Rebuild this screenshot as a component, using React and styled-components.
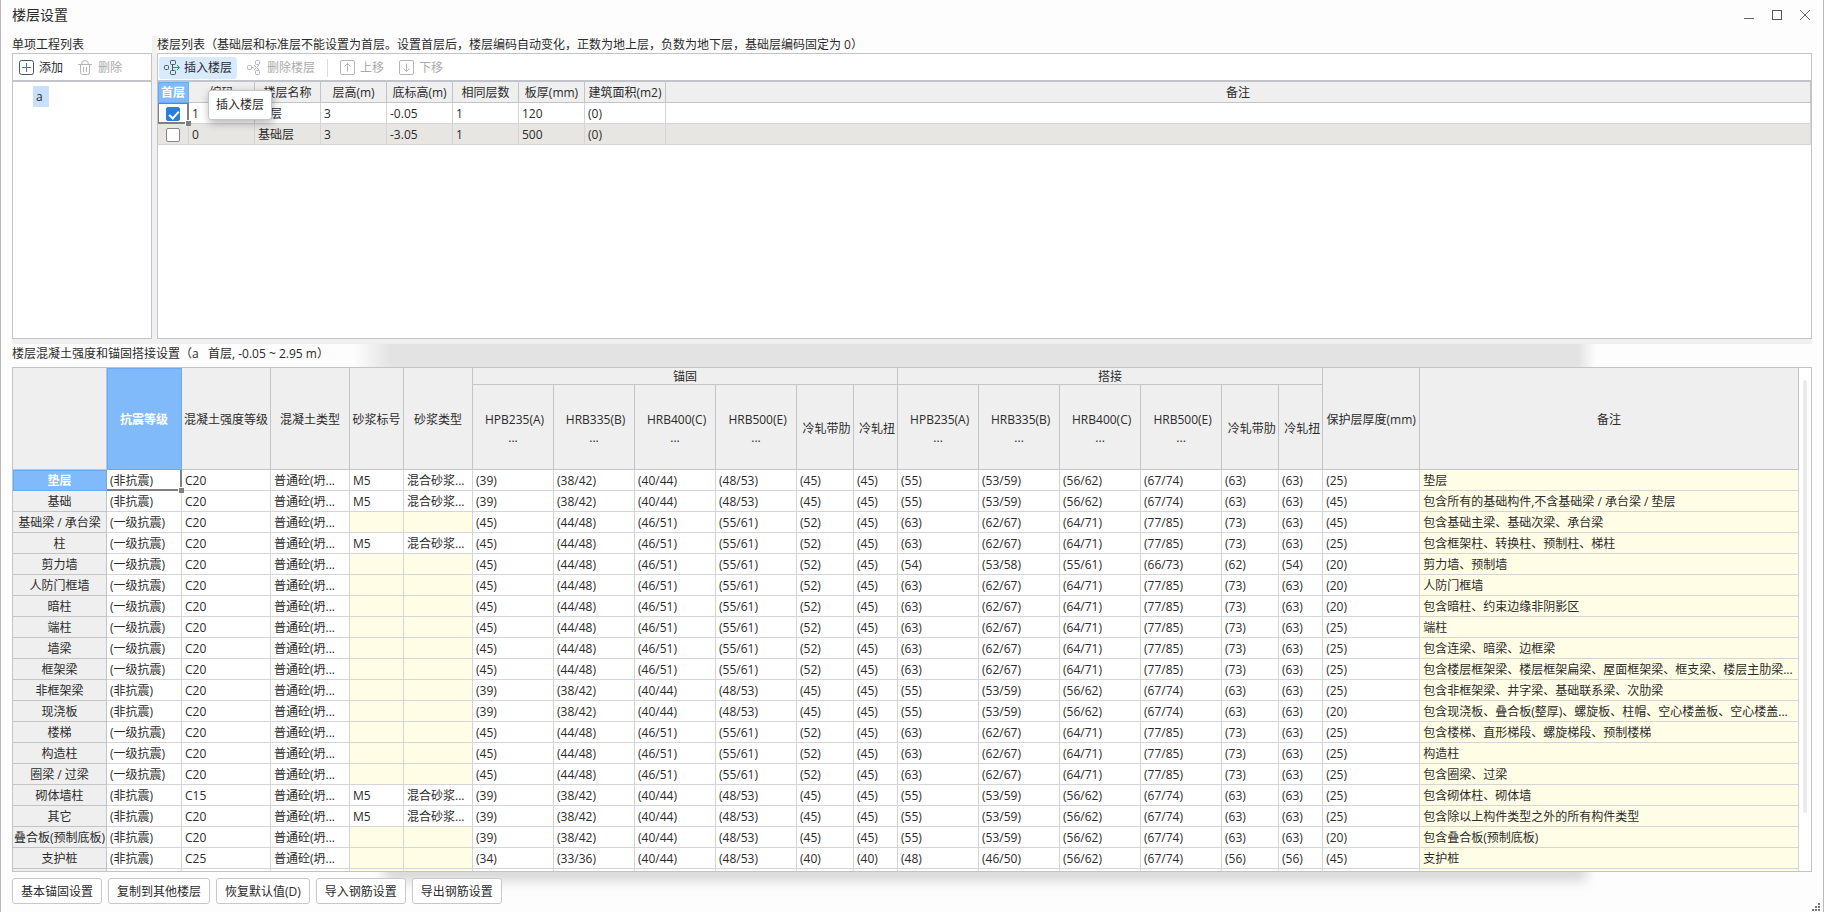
import React, { useState } from 'react';
import styled, { createGlobalStyle, css } from 'styled-components';

const GlobalStyle = createGlobalStyle`
  * {
    box-sizing: border-box;
  }
  body {
    margin: 0;
    color: #2b2b2b;
    font-family: "Open Sans", "Noto Sans CJK SC", sans-serif;
    font-size: 12px;
    line-height: 16px;
  }
  button, input {
    font: inherit;
    color: inherit;
  }
`;

const Window = styled.div`
  position: relative;
  display: flex;
  flex-direction: column;
  height: 100vh;
  overflow: hidden;
  background: #fdfdfd;
  border: solid #b9b9b9;
  border-width: 0 1px;
`;

const TitleBar = styled.header`
  display: flex;
  align-items: center;
  justify-content: space-between;
  height: 30px;
  margin-bottom: 6px;
  padding: 0 8px 0 11px;
`;

const Title = styled.h1`
  margin: 0;
  font-size: 14px;
  line-height: 20px;
  font-weight: 400;
`;

const WindowButtons = styled.div`
  display: flex;
  gap: 8px;
`;

const WindowButton = styled.button`
  display: flex;
  align-items: center;
  justify-content: center;
  width: 20px;
  height: 20px;
  padding: 0;
  border: 0;
  background: none;
`;

const Upper = styled.section`
  display: grid;
  grid-template-columns: 140px 1fr;
  gap: 5px;
  flex: 0 0 308px;
  padding-bottom: 5px;
  margin: 0 11px;
  background: #f0f0f0;
`;

const Pane = styled.div`
  display: flex;
  flex-direction: column;
  min-width: 0;
  background: #fdfdfd;
`;

const PaneTitle = styled.h2`
  margin: 0;
  height: 17px;
  font-size: 12px;
  line-height: 18px;
  font-weight: 400;
  white-space: nowrap;
`;

const Toolbar = styled.div`
  display: flex;
  align-items: center;
  height: 28px;
  padding: 1px 1px 0;
  background: #fff;
  border: 1px solid #c3c4c9;
`;

const ToolItem = styled.div`
  position: relative;
  display: flex;
  margin-right: 5px;
`;

const ToolButton = styled.button`
  display: flex;
  align-items: center;
  gap: 4px;
  height: 22px;
  padding: 0 5px;
  border: 0;
  border-radius: 3px;
  background: ${props => (props.$active ? '#d8eafe' : 'transparent')};
  white-space: nowrap;

  &:disabled {
    color: #ababab;
  }

  & + & {
    margin-left: 5px;
  }
`;

const Divider = styled.span`
  width: 1px;
  height: 18px;
  margin: 0 7px;
  background: #dcdcdc;
`;

const Tooltip = styled.div`
  position: absolute;
  top: 33px;
  left: 49px;
  z-index: 2;
  padding: 6px 7px;
  border: 1px solid #c6c6c6;
  border-radius: 3px;
  background: #fff;
  box-shadow: 1px 3px 8px rgba(0, 0, 0, 0.3);
  white-space: nowrap;
`;

const Panel = styled.div`
  flex: 1;
  min-height: 0;
  overflow: hidden;
  background: #fff;
  border: 1px solid #c3c4c9;
`;

const Tree = styled.ul`
  margin: 4px 0 0;
  padding: 0 0 0 20px;
  list-style: none;
`;

const TreeNode = styled.li`
  width: 16px;
  padding-left: 3px;
  line-height: 21px;
  background: #c9e0fc;
`;

const Table = styled.table`
  width: 100%;
  table-layout: fixed;
  border-collapse: separate;
  border-spacing: 0;
`;

const Head = styled.th`
  height: 21px;
  padding: 2px 0 0;
  line-height: 16px;
  font-weight: 400;
  text-align: center;
  white-space: pre;
  overflow: hidden;
  background: #efefef;
  border: solid #c3c4c6;
  border-width: 0 1px 1px 0;

  ${props =>
    props.$selected &&
    css`
      color: #fff;
      font-weight: 700;
      background: #80bafa;
      border-color: #6aabf0;
      box-shadow: inset 1px 1px #6aabf0;
    `}
`;

const GroupHead = styled(Head)`
  height: 17px;
  line-height: 14px;
`;

const SubHead = styled(Head)`
  height: 85px;
  padding-top: 4px;
  line-height: 18px;
`;

const Cell = styled.td`
  position: relative;
  height: 21px;
  padding: 2px 0 0 3px;
  line-height: 16px;
  white-space: nowrap;
  background: ${props =>
    props.$readonly ? '#fffde6' : props.$shaded ? '#e8e6e2' : '#fff'};
  border: solid #d5d5d5;
  border-width: 0 1px 1px 0;
`;

const Focus = styled.span`
  position: absolute;
  inset: 0 -1px -1px 0;
  border: solid #808080;
  border-width: ${props => (props.$boxed ? '1px 2px 2px 1px' : '0 2px 2px 0')};
  pointer-events: none;

  &::after {
    content: '';
    position: absolute;
    z-index: 1;
    right: -4px;
    bottom: -4px;
    width: 5px;
    height: 5px;
    background: #808080;
    border: solid #fff;
    border-width: 1px 0 0 1px;
  }
`;

const CheckBox = styled.input`
  appearance: none;
  position: relative;
  display: block;
  width: 14px;
  height: 14px;
  margin: 0 auto 0 5px;
  border: 1px solid #858585;
  border-radius: 2px;
  background: #fff;

  &:checked {
    border-color: #2a7ee3;
    background: #2a7ee3;
  }

  &:checked::after {
    content: '';
    position: absolute;
    left: 4px;
    top: 1px;
    width: 4px;
    height: 8px;
    border: solid #fff;
    border-width: 0 2px 2px 0;
    transform: rotate(42deg);
  }
`;

const Lower = styled.section`
  flex: 1;
  min-height: 0;
  display: flex;
  flex-direction: column;
  margin: 0 11px;
`;

const LowerTitle = styled(PaneTitle)`
  height: 23px;
  line-height: 20px;
  background: linear-gradient(
    to right,
    #fdfdfd 19%,
    #e3e3e3 21%,
    #e3e3e3 87%,
    #fdfdfd 88%
  );
  white-space: pre;
`;

const Scroller = styled.div`
  flex: 1;
  min-height: 0;
  display: flex;
  overflow: hidden;
  background: #fff;
  border: 1px solid #c3c4c6;
`;

const ScrollContent = styled.div`
  flex: 1;
  min-width: 0;
`;

const ScrollTrack = styled.div`
  display: flex;
  width: 12px;
  padding: 12px 4px 58px;
`;

const ScrollThumb = styled.div`
  flex: 1;
  border-radius: 2px;
  background: #ebebeb;
`;

const Footer = styled.footer`
  position: relative;
  display: flex;
  gap: 6px;
  height: 40px;
  padding: 6px 11px 8px;
  overflow: hidden;

  &::before {
    content: '';
    position: absolute;
    top: -8px;
    left: 21%;
    right: 13%;
    height: 17px;
    background: #d6d6d6;
    filter: blur(6px);
  }
`;

const FooterButton = styled.button`
  position: relative;
  padding: 2px 8px 0;
  border: 1px solid #c8c8c8;
  border-radius: 3px;
  background: #fff;
  white-space: nowrap;
`;

const Grip = styled.svg`
  position: absolute;
  right: 2px;
  bottom: 0;
`;

const AddIcon = () => (
  <svg width="16" height="16" viewBox="0 0 16 16" fill="none">
    <rect x=".5" y=".5" width="14" height="14" rx="2" stroke="#4a5568" />
    <path d="M7.5 3v9M3 7.5h9" stroke="#2a7ee3" />
  </svg>
);

const TrashIcon = () => (
  <svg width="16" height="16" viewBox="0 0 16 16" fill="none" stroke="#b5b5b5">
    <path d="M0 4.500h14M2.500 4.500v8q0 2 2 2h5q2 0 2-2v-8M3.500 4.500q0-4 3.500-4t3.500 4M5.500 7v5M8.500 7v5" />
  </svg>
);

const InsertFloorIcon = () => (
  <svg width="16" height="16" viewBox="0 0 16 16" fill="none" stroke="#4a5568">
    <rect x=".5" y="5.500" width="4" height="4" rx="1" />
    <rect x="6.500" y=".5" width="5" height="4" rx="1" />
    <rect x="6.500" y="10.500" width="5" height="4" rx="1" />
    <path d="M8.500 4.500v6" />
    <path d="M9 7.500h6.500M13 5l2.500 2.500L13 10" stroke="#2a7ee3" />
  </svg>
);

const DeleteFloorIcon = () => (
  <svg width="16" height="16" viewBox="0 0 16 16" fill="none" stroke="#b5b5b5">
    <rect x=".5" y="5.500" width="4" height="4" rx="1" />
    <rect x="8.500" y=".5" width="4" height="4" rx="1" />
    <rect x="8.500" y="10.500" width="4" height="4" rx="1" />
    <path d="M4.500 7.500h2M7 5l5 5M12 5l-5 5" />
  </svg>
);

const MoveIcon = ({ down }) => (
  <svg width="16" height="16" viewBox="0 0 16 16" fill="none" stroke="#b5b5b5">
    <rect x=".5" y=".5" width="14" height="14" rx="1.500" />
    <path
      d={
        down
          ? 'M7.500 3.500v8M4.500 8.500l3 3 3-3'
          : 'M7.500 11.500v-8M4.500 6.500l3-3 3 3'
      }
    />
  </svg>
);

const floorColumns = [
  ['首层', 31],
  ['编码', 66],
  ['楼层名称', 66],
  ['层高(m)', 66],
  ['底标高(m)', 66],
  ['相同层数', 66],
  ['板厚(mm)', 66],
  ['建筑面积(m2)', 81],
  ['备注', null]
];

const initialFloors = [
  { first: true, cells: ['1', '首层', '3', '-0.05', '1', '120', '(0)', ''] },
  { first: false, cells: ['0', '基础层', '3', '-3.05', '1', '500', '(0)', ''] }
];

const steelNames = [
  ' HPB235(A)\n...',
  ' HRB335(B)\n...',
  ' HRB400(C)\n...',
  ' HRB500(E)\n...',
  ' 冷轧带肋',
  ' 冷轧扭'
];

const settingWidths = [
  94, 75, 89, 79, 54, 69, 81, 81, 81, 81, 57, 44, 81, 81, 81, 81, 57, 44, 97
];

const NONE = '(非抗震)';
const FIRST = '(一级抗震)';

const anchorage = {
  none: ['(39)', '(38/42)', '(40/44)', '(48/53)', '(45)', '(45)'],
  first: ['(45)', '(44/48)', '(46/51)', '(55/61)', '(52)', '(45)'],
  pile: ['(34)', '(33/36)', '(40/44)', '(48/53)', '(40)', '(40)']
};

const lapping = {
  none: ['(55)', '(53/59)', '(56/62)', '(67/74)', '(63)', '(63)'],
  first: ['(63)', '(62/67)', '(64/71)', '(77/85)', '(73)', '(63)'],
  wall: ['(54)', '(53/58)', '(55/61)', '(66/73)', '(62)', '(54)'],
  pile: ['(48)', '(46/50)', '(56/62)', '(67/74)', '(56)', '(56)']
};

// name, seismic grade, concrete, has mortar, anchorage, lapping, cover, remark
const settings = [
  ['垫层', NONE, 'C20', true, 'none', 'none', 25, '垫层'],
  ['基础', NONE, 'C20', true, 'none', 'none', 45, '包含所有的基础构件,不含基础梁 / 承台梁 / 垫层'],
  ['基础梁 / 承台梁', FIRST, 'C20', false, 'first', 'first', 45, '包含基础主梁、基础次梁、承台梁'],
  ['柱', FIRST, 'C20', true, 'first', 'first', 25, '包含框架柱、转换柱、预制柱、梯柱'],
  ['剪力墙', FIRST, 'C20', false, 'first', 'wall', 20, '剪力墙、预制墙'],
  ['人防门框墙', FIRST, 'C20', false, 'first', 'first', 20, '人防门框墙'],
  ['暗柱', FIRST, 'C20', false, 'first', 'first', 20, '包含暗柱、约束边缘非阴影区'],
  ['端柱', FIRST, 'C20', false, 'first', 'first', 25, '端柱'],
  ['墙梁', FIRST, 'C20', false, 'first', 'first', 25, '包含连梁、暗梁、边框梁'],
  ['框架梁', FIRST, 'C20', false, 'first', 'first', 25, '包含楼层框架梁、楼层框架扁梁、屋面框架梁、框支梁、楼层主肋梁...'],
  ['非框架梁', NONE, 'C20', false, 'none', 'none', 25, '包含非框架梁、井字梁、基础联系梁、次肋梁'],
  ['现浇板', NONE, 'C20', false, 'none', 'none', 20, '包含现浇板、叠合板(整厚)、螺旋板、柱帽、空心楼盖板、空心楼盖...'],
  ['楼梯', FIRST, 'C20', false, 'first', 'first', 25, '包含楼梯、直形梯段、螺旋梯段、预制楼梯'],
  ['构造柱', FIRST, 'C20', false, 'first', 'first', 25, '构造柱'],
  ['圈梁 / 过梁', FIRST, 'C20', false, 'first', 'first', 25, '包含圈梁、过梁'],
  ['砌体墙柱', NONE, 'C15', true, 'none', 'none', 25, '包含砌体柱、砌体墙'],
  ['其它', NONE, 'C20', true, 'none', 'none', 25, '包含除以上构件类型之外的所有构件类型'],
  ['叠合板(预制底板)', NONE, 'C20', false, 'none', 'none', 20, '包含叠合板(预制底板)'],
  ['支护桩', NONE, 'C25', false, 'pile', 'pile', 45, '支护桩']
];

const footerActions = [
  '基本锚固设置',
  '复制到其他楼层',
  '恢复默认值(D)',
  '导入钢筋设置',
  '导出钢筋设置'
];

const FloorTable = () => {
  const [floors, setFloors] = useState(initialFloors);

  const selectFirst = index => {
    setFloors(floors.map((floor, i) => ({ ...floor, first: i === index })));
  };

  return (
    <Table>
      <colgroup>
        {floorColumns.map(([name, width]) => (
          <col key={name} width={width || undefined} />
        ))}
      </colgroup>
      <thead>
        <tr>
          {floorColumns.map(([name], i) => (
            <Head key={name} $selected={i === 0}>
              {name}
            </Head>
          ))}
        </tr>
      </thead>
      <tbody>
        {floors.map((floor, row) => (
          <tr key={floor.cells[0]}>
            <Cell $shaded={row % 2 === 1}>
              <CheckBox
                type="checkbox"
                aria-label="首层"
                checked={floor.first}
                onChange={() => selectFirst(row)}
              />
              {row === 0 && <Focus $boxed />}
            </Cell>
            {floor.cells.map((text, i) => (
              <Cell key={i} $shaded={row % 2 === 1}>
                {text}
              </Cell>
            ))}
          </tr>
        ))}
      </tbody>
    </Table>
  );
};

const SettingRow = ({ item, selected }) => {
  const [name, grade, concrete, mortar, anchor, lap, cover, remark] = item;
  return (
    <tr>
      <Head scope="row" $selected={selected}>
        {name}
      </Head>
      <Cell>
        {grade}
        {selected && <Focus />}
      </Cell>
      <Cell>{concrete}</Cell>
      <Cell>普通砼(坍...</Cell>
      <Cell $readonly={!mortar}>{mortar && 'M5'}</Cell>
      <Cell $readonly={!mortar}>{mortar && '混合砂浆...'}</Cell>
      {anchorage[anchor].map((value, i) => (
        <Cell key={i}>{value}</Cell>
      ))}
      {lapping[lap].map((value, i) => (
        <Cell key={i}>{value}</Cell>
      ))}
      <Cell>({cover})</Cell>
      <Cell $readonly>{remark}</Cell>
    </tr>
  );
};

const SettingTable = () => (
  <Table>
    <colgroup>
      {settingWidths.map((width, i) => (
        <col key={i} width={width} />
      ))}
      <col />
    </colgroup>
    <thead>
      <tr>
        <Head rowSpan={2} />
        <Head rowSpan={2} $selected>
          抗震等级
        </Head>
        <Head rowSpan={2}>混凝土强度等级</Head>
        <Head rowSpan={2}>混凝土类型</Head>
        <Head rowSpan={2}>砂浆标号</Head>
        <Head rowSpan={2}>砂浆类型</Head>
        <GroupHead colSpan={6}>锚固</GroupHead>
        <GroupHead colSpan={6}>搭接</GroupHead>
        <Head rowSpan={2}>保护层厚度(mm)</Head>
        <Head rowSpan={2}>备注</Head>
      </tr>
      <tr>
        {steelNames.concat(steelNames).map((name, i) => (
          <SubHead key={i}>{name}</SubHead>
        ))}
      </tr>
    </thead>
    <tbody>
      {settings.map((item, i) => (
        <SettingRow key={item[0]} item={item} selected={i === 0} />
      ))}
      <tr>
        <Head scope="row" />
        {settingWidths.slice(1).map((width, i) => (
          <Cell key={i} $readonly={i === 3 || i === 4} />
        ))}
        <Cell $readonly />
      </tr>
    </tbody>
  </Table>
);

const App = () => (
  <Window>
    <GlobalStyle />
    <TitleBar>
      <Title>楼层设置</Title>
      <WindowButtons>
        <WindowButton aria-label="最小化">
          <svg width="10" height="10" stroke="#666">
            <path d="M0 8.500h10" />
          </svg>
        </WindowButton>
        <WindowButton aria-label="最大化">
          <svg width="10" height="10" fill="none" stroke="#555">
            <rect x=".5" y=".5" width="9" height="9" />
          </svg>
        </WindowButton>
        <WindowButton aria-label="关闭">
          <svg width="10" height="10" stroke="#666">
            <path d="M0 0l10 10M10 0L0 10" />
          </svg>
        </WindowButton>
      </WindowButtons>
    </TitleBar>
    <Upper>
      <Pane>
        <PaneTitle>单项工程列表</PaneTitle>
        <Toolbar>
          <ToolButton>
            <AddIcon />
            添加
          </ToolButton>
          <ToolButton disabled>
            <TrashIcon />
            删除
          </ToolButton>
        </Toolbar>
        <Panel>
          <Tree>
            <TreeNode>a</TreeNode>
          </Tree>
        </Panel>
      </Pane>
      <Pane>
        <PaneTitle>
          楼层列表（基础层和标准层不能设置为首层。设置首层后，楼层编码自动变化，正数为地上层，负数为地下层，基础层编码固定为 0）
        </PaneTitle>
        <Toolbar>
          <ToolItem>
            <ToolButton $active>
              <InsertFloorIcon />
              插入楼层
            </ToolButton>
            <Tooltip role="tooltip">插入楼层</Tooltip>
          </ToolItem>
          <ToolButton disabled>
            <DeleteFloorIcon />
            删除楼层
          </ToolButton>
          <Divider />
          <ToolButton disabled>
            <MoveIcon />
            上移
          </ToolButton>
          <ToolButton disabled>
            <MoveIcon down />
            下移
          </ToolButton>
        </Toolbar>
        <Panel>
          <FloorTable />
        </Panel>
      </Pane>
    </Upper>
    <Lower>
      <LowerTitle>楼层混凝土强度和锚固搭接设置（a   首层, -0.05 ~ 2.95 m）</LowerTitle>
      <Scroller>
        <ScrollContent>
          <SettingTable />
        </ScrollContent>
        <ScrollTrack>
          <ScrollThumb />
        </ScrollTrack>
      </Scroller>
    </Lower>
    <Footer>
      {footerActions.map(action => (
        <FooterButton key={action}>{action}</FooterButton>
      ))}
    </Footer>
    <Grip width="9" height="9" fill="#777">
      <path d="M6 0h2v2h-2zM3 3h2v2h-2zM6 3h2v2h-2zM0 6h2v2h-2zM3 6h2v2h-2zM6 6h2v2h-2z" />
    </Grip>
  </Window>
);

export default App;
